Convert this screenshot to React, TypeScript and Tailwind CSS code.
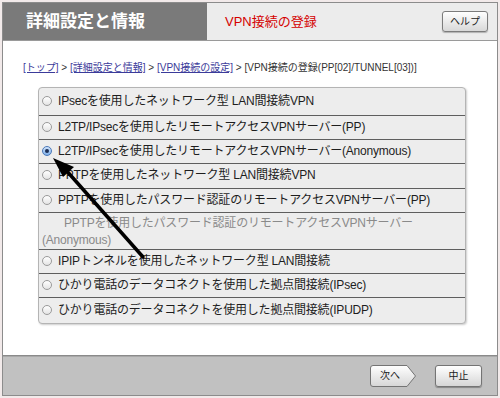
import React from 'react';

const font = { fontFamily: '"Liberation Sans", "Noto Sans CJK JP", sans-serif' };

type Row = { label: string; checked?: boolean; h: string };

const rows: Row[] = [
  { label: 'IPsecを使用したネットワーク型 LAN間接続VPN', h: 'h-[27px]' },
  { label: 'L2TP/IPsecを使用したリモートアクセスVPNサーバー(PP)', h: 'h-[24px]' },
  { label: 'L2TP/IPsecを使用したリモートアクセスVPNサーバー(Anonymous)', checked: true, h: 'h-[24px]' },
  { label: 'PPTPを使用したネットワーク型 LAN間接続VPN', h: 'h-[25px]' },
  { label: 'PPTPを使用したパスワード認証のリモートアクセスVPNサーバー(PP)', h: 'h-[24px]' },
];

const rowsAfter: Row[] = [
  { label: 'IPIPトンネルを使用したネットワーク型 LAN間接続', h: 'h-[24px]' },
  { label: 'ひかり電話のデータコネクトを使用した拠点間接続(IPsec)', h: 'h-[24px]' },
  { label: 'ひかり電話のデータコネクトを使用した拠点間接続(IPUDP)', h: 'h-[26px]' },
];

const Radio = ({ checked }: { checked?: boolean }) => (
  <span
    className={`w-[10px] h-[10px] rounded-full border flex items-center justify-center shrink-0 ${
      checked ? 'border-[#4a78b8] bg-gradient-to-b from-[#cfe3fb] to-[#7fb0ea]' : 'border-[#9a9a9a] bg-gradient-to-b from-white to-[#e4e4e4]'
    }`}
  >
    {checked && <span className="w-[4px] h-[4px] rounded-full bg-[#1c2f55]" />}
  </span>
);

const OptionRow = ({ row, first }: { row: Row; first?: boolean }) => (
  <label
    className={`flex items-center gap-[6px] pl-[3px] pb-[2px] text-[12px] tracking-[-0.2px] text-[#1e1e1e] ${row.h} ${
      first ? '' : 'border-t border-[#5e5e5e]'
    }`}
  >
    <Radio checked={row.checked} />
    <span className="whitespace-nowrap">{row.label}</span>
  </label>
);

const Breadcrumb = () => (
  <div className="pl-[20px] pt-[20px] h-[34px] leading-[14px] text-[10px] text-[#333] whitespace-nowrap">
    <span className="text-[#3b3b9a] underline">[トップ]</span>
    {' > '}
    <span className="text-[#3b3b9a] underline">[詳細設定と情報]</span>
    {' > '}
    <span className="text-[#3b3b9a] underline">[VPN接続の設定]</span>
    {' > [VPN接続の登録(PP[02]/TUNNEL[03])]'}
  </div>
);

const NextButton = () => (
  <button className="relative w-[48px] h-[24px] text-[10px] text-[#222]">
    <svg className="absolute inset-0" width="48" height="24" viewBox="0 0 48 24">
      <defs>
        <linearGradient id="nb" x1="0" y1="0" x2="0" y2="1">
          <stop offset="0" stopColor="#ffffff" />
          <stop offset="1" stopColor="#d6d6d6" />
        </linearGradient>
      </defs>
      <path d="M4 1.5 H38 L46.5 12 L38 22.5 H4 Q1.5 22.5 1.5 20 V4 Q1.5 1.5 4 1.5 Z" fill="url(#nb)" stroke="#747474" strokeWidth="1" />
    </svg>
    <span className="relative pr-[6px]">次へ</span>
  </button>
);

const App = () => {
  return (
    <div className="w-[500px] h-[398px] bg-[#f2eaea] pl-[2px] pt-[2px]" style={font}>
      <div className="relative w-[496px] h-[394px] border border-[#8c8c8c] bg-white flex flex-col">
        {/* Header */}
        <div className="flex h-[38px] border-b border-[#9a9a9a]">
          <div className="w-[204px] bg-[#7a7a7a] flex items-center pl-[23px] text-white text-[17px] font-bold">
            詳細設定と情報
          </div>
          <div className="flex-1 bg-[#ececec] flex items-center justify-between pl-[18px] pr-[9px]">
            <span className="text-[13px] text-[#d40000]">VPN接続の登録</span>
            <button className="w-[46px] h-[21px] rounded-[3px] border border-[#7c7c7c] bg-gradient-to-b from-white to-[#d8d8d8] shadow-[0_1px_1px_rgba(0,0,0,0.25)] text-[10px] text-[#222]">
              ヘルプ
            </button>
          </div>
        </div>

        {/* Content */}
        <div className="h-[314px]">
          <Breadcrumb />
          <div className="ml-[35px] mt-[12px] w-[428px] rounded-[4px] border border-[#b4b4b4] bg-[#ededed] shadow-[1px_1px_2px_rgba(0,0,0,0.2)] flex flex-col">
            {rows.map((r, i) => (
              <OptionRow key={i} row={r} first={i === 0} />
            ))}
            <div className="h-[37px] border-t border-[#5e5e5e] pl-[3px] pt-[2px] text-[12px] tracking-[-0.2px] leading-[17px] text-[#8a8a8a] whitespace-nowrap">
              <span className="pl-[22px]">PPTPを使用したパスワード認証のリモートアクセスVPNサーバー</span>
              <br />
              (Anonymous)
            </div>
            {rowsAfter.map((r, i) => (
              <OptionRow key={i} row={r} />
            ))}
          </div>
        </div>

        {/* Footer */}
        <div className="flex-1 bg-[#c1c1c1] border-t border-[#8a8a8a] shadow-[inset_0_1px_0_#a8a8a8] flex items-center justify-end pr-[15px] gap-[18px]">
          <NextButton />
          <button className="w-[47px] h-[22px] rounded-[3px] border border-[#747474] bg-gradient-to-b from-white to-[#d6d6d6] shadow-[0_1px_1px_rgba(0,0,0,0.3)] text-[10px] text-[#222]">
            中止
          </button>
        </div>

        {/* annotation arrow */}
        <svg className="absolute left-0 top-0 pointer-events-none" width="496" height="394" viewBox="0 0 496 394">
          <line x1="140" y1="254" x2="62" y2="166" stroke="#000" strokeWidth="3.5" strokeLinecap="round" />
          <polygon points="50,155 71,164 60,174" fill="#000" />
        </svg>
      </div>
    </div>
  );
};

export default App;
